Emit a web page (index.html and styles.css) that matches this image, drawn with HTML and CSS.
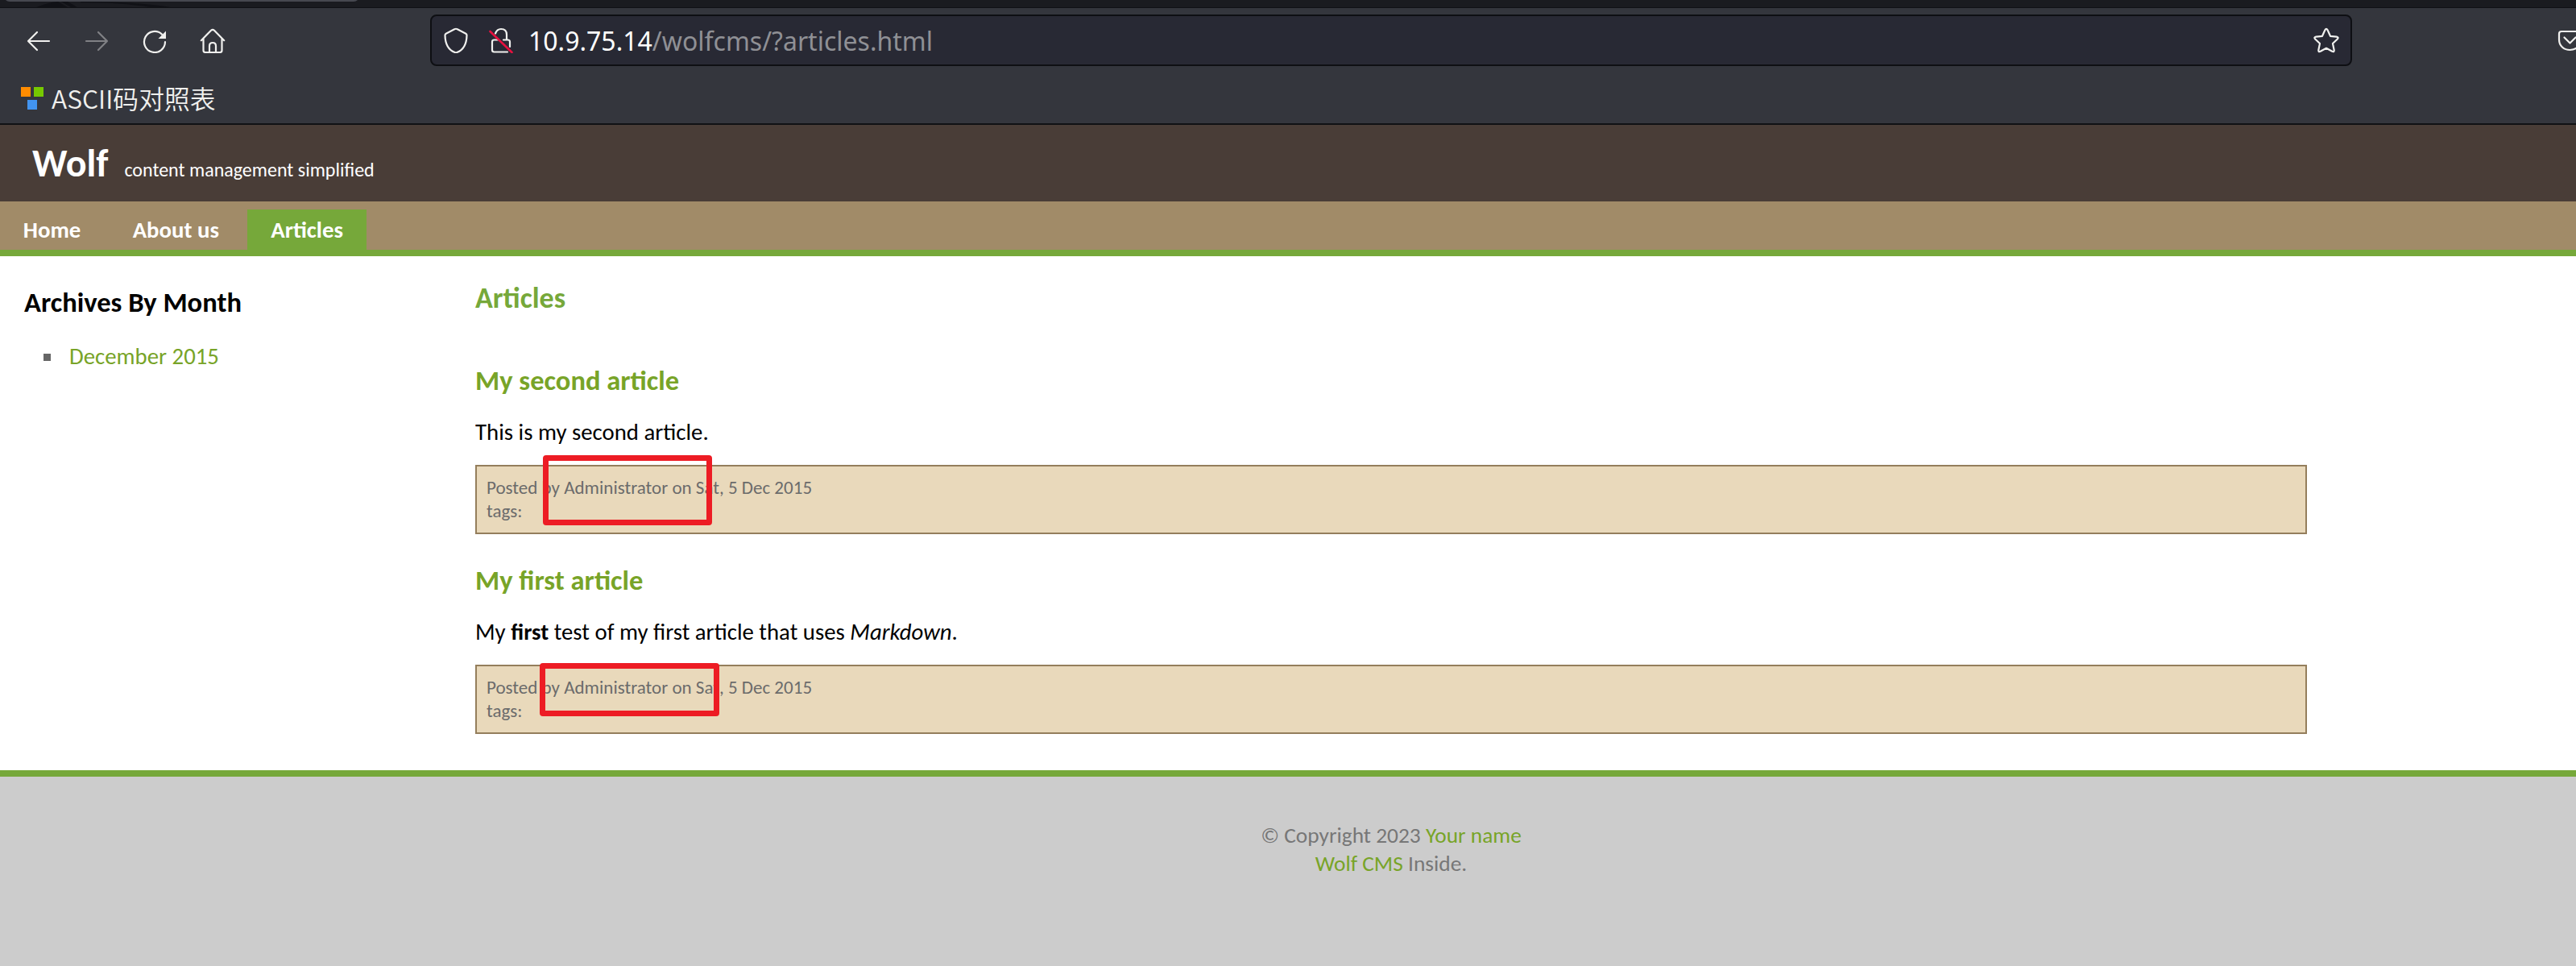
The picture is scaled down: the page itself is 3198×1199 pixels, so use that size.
FILE: index.html
```html
<!DOCTYPE html>
<html lang="en">
<head>
<meta charset="utf-8">
<title>Articles - Wolf CMS</title>
<link rel="stylesheet" href="styles.css">
</head>
<body>
<div class="browser">
  <div class="tabstrip">
    <svg width="460" height="9" viewBox="0 0 460 9"><path d="M45 9Q60 3 72 2l12 7zM76 2h8l12 7h-8zM100 2q70 0 112 7h-25Q150 3 100 3z" fill="#101116"/><path d="M7 0h437q-2 2-5 2H12Q9 2 7 0z" fill="#464850"/></svg>
  </div>
  <div class="toolbar">
    <div class="nav-buttons">
      <svg class="icon" viewBox="0 0 32 32"><path d="M29 17H3M14 6 3 17l11 11"/></svg>
      <svg class="icon icon-disabled" viewBox="0 0 32 32"><path d="M3 17h26M18 6l11 11-11 11"/></svg>
      <svg class="icon" viewBox="0 0 32 32"><path d="M29 18A13 13 0 1 1 25 8.6"/><path class="solid" d="M30 4.5V14h-9.5z"/></svg>
      <svg class="icon" viewBox="0 0 32 32"><path d="M1.800 16.200 14 3.800q2-2 4 0l12.200 12.400M4.500 13.500V28.500Q4.500 31 7 31h18q2.500 0 2.500-2.500V13.500M12 31v-8q0-4 4-4t4 4v8"/></svg>
    </div>
    <div class="urlbar">
      <svg class="icon" viewBox="0 0 32 32"><path d="M14.700 2.100q1.300-.7 2.600 0L28.300 7.700q1.200.6 1.200 2C29.300 20 26.500 27.500 17.300 31q-1.300.5-2.600 0C5.500 27.500 2.700 20 2.500 9.700q0-1.400 1.200-2z"/></svg>
      <svg class="icon icon-lock" viewBox="0 0 32 32"><path d="M9 7.500Q11 2 16 2q7 0 7 7v6.500M12 15.500H7.500q-2.500 0-2.500 2.500v10q0 2.500 2.500 2.500H24M19 15.500h5.500q2.500 0 2.500 2.500v6"/><path class="slash" d="M2.500 5 29.500 31"/></svg>
      <div class="url"><span class="host">10.9.75.14</span>/wolfcms/?articles.html</div>
      <svg class="icon" viewBox="0 0 32 32"><path d="M14.400 3.300q1.600-2.800 3.200 0L21 10.800l7.800.8q3 .6 1 2.900L24 20l1.700 8.200q.2 2.800-2.400 1.600L16 25.800l-7.300 4q-2.600 1.200-2.400-1.600L8 20l-5.800-5.500q-2-2.300 1-2.900l7.800-.8z"/></svg>
    </div>
    <svg class="icon pocket" viewBox="0 0 32 32"><path d="M5 5h21q3 0 3 3v7c0 8-6 13-13.500 13S2 23 2 15V8q0-3 3-3zM8.500 12.500l7 7 7-7"/></svg>
  </div>
  <div class="bookmarks">
    <svg width="28" height="28" viewBox="0 0 28 28"><path fill="#ff8c00" d="M0 0h12v12H0z"/><path fill="#76c900" d="M16 0h12v12H16z"/><path fill="#4294f0" d="M8 16h12v12H8z"/></svg>
    <span class="bookmark">ASCII码对照表</span>
  </div>
</div>

<header class="header">
  <h1>Wolf</h1>
  <span class="tagline">content management simplified</span>
</header>
<nav class="nav">
  <a>Home</a>
  <a>About us</a>
  <a class="current">Articles</a>
</nav>

<div class="page">
  <aside class="sidebar">
    <h3>Archives By Month</h3>
    <ul><li><a>December 2015</a></li></ul>
  </aside>
  <main class="content">
    <h2>Articles</h2>
    <article class="entry entry-lead">
      <h3><a>My second article</a></h3>
      <p>This is my second article.</p>
      <div class="info">Posted by Administrator on Sat, 5 Dec 2015<br>tags:<span class="mark mark-second"></span></div>
    </article>
    <article class="entry">
      <h3><a>My first article</a></h3>
      <p>My <strong>first</strong> test of my first article that uses <em>Markdown</em>.</p>
      <div class="info">Posted by Administrator on Sat, 5 Dec 2015<br>tags:<span class="mark mark-first"></span></div>
    </article>
  </main>
</div>

<footer class="footer">
  <p>© Copyright 2023 <a>Your name</a><br><a>Wolf CMS</a> Inside.</p>
</footer>
</body>
</html>
```
FILE: styles.css
```css
* { box-sizing: border-box; margin: 0; padding: 0; }

body {
  height: 1199px;
  display: flex;
  flex-direction: column;
  overflow: hidden;
  background: #fff;
  color: #000;
  font: 28.8px/36px Carlito, Lato, sans-serif;
}

a { color: #78a428; }

/* browser chrome */
.browser { height: 155px; background: #34363d; border-bottom: 2px solid #101115; }
.tabstrip { height: 10px; background: #1a1b20; border-bottom: 1px solid #101115; }
.tabstrip svg { display: block; }
.toolbar { display: flex; align-items: center; height: 80px; padding-left: 32px; overflow: hidden; }
.nav-buttons { display: flex; flex: none; gap: 40px; width: 502px; }
.icon {
  flex: none;
  width: 32px;
  height: 32px;
  fill: none;
  stroke: #f0f0ee;
  stroke-width: 2.2;
  stroke-linecap: round;
  stroke-linejoin: round;
}
.icon-disabled { stroke: #808185; }
.icon .solid { fill: #f0f0ee; stroke: none; }
.icon .slash { stroke: #e6113f; stroke-width: 2.6; }
.icon-lock { margin-left: 24px; }
.urlbar {
  display: flex;
  flex: none;
  align-items: center;
  width: 2386px;
  height: 64px;
  padding: 0 14px;
  background: #282934;
  border: 2px solid #0e0f13;
  border-radius: 8px;
}
.url {
  flex: 1;
  margin-left: 18px;
  padding-top: 2px;
  color: #8f9095;
  font: 32px/44px "Noto Sans", sans-serif;
  white-space: nowrap;
}
.host { color: #fff; }
.pocket { margin-left: 255px; }
.bookmarks { display: flex; align-items: center; gap: 10px; height: 63px; padding: 0 0 0 26px; }
.bookmark { color: #f0f0ee; font: 350 31.8px/44px "Noto Sans CJK SC", sans-serif; padding-bottom: 2px; }

/* site header */
.header {
  display: flex;
  align-items: baseline;
  gap: 20px;
  height: 95px;
  padding: 16px 0 0 40px;
  background: #493d37;
  color: #fff;
}
.header h1 { font-size: 48px; line-height: 64px; }
.tagline { font-size: 24px; }
.nav {
  display: flex;
  gap: 6.7px;
  height: 68px;
  padding-top: 10px;
  background: #a18b68;
  border-bottom: 8px solid #76a83a;
}
.nav a { padding: 2px 28.8px 0; color: #fff; font-weight: bold; line-height: 48px; height: 50px; }
.nav .current { background: #76a83a; }

/* page body */
.page { display: flex; height: 638px; }
.sidebar { width: 590px; padding: 36px 0 0 30px; }
h2, h3 { font-size: 34.56px; line-height: 42px; }
.sidebar ul { margin-top: 29px; list-style: none; }
.sidebar li { display: flex; align-items: center; gap: 23px; padding-left: 24px; }
.sidebar li::before { content: ""; width: 9px; height: 9px; background: #666; }
.content { width: 2274px; padding-top: 31px; }
.content h2 { color: #76a83a; font-size: 36px; }
.entry { margin-top: 36px; }
.entry-lead { margin-top: 60px; }
.entry p { margin: 26px 0 22px; }
.info {
  position: relative;
  height: 86px;
  padding: 12px;
  background: #e9d9bb;
  border: 2px solid #947e5c;
  color: #6b6b6b;
  font-size: 23.04px;
  line-height: 29px;
}
.mark { position: absolute; border: 7px solid #ed1c24; border-radius: 4px; }
.mark-second { left: 82px; top: -14px; width: 210px; height: 87px; }
.mark-first { left: 78px; top: -4px; width: 223px; height: 66px; }

.footer {
  flex: 1;
  padding: 55px 0 0 256px;
  background: #ccc;
  border-top: 8px solid #76a83a;
  color: #777;
  font-size: 27.4px;
  line-height: 35px;
  text-align: center;
}
```
